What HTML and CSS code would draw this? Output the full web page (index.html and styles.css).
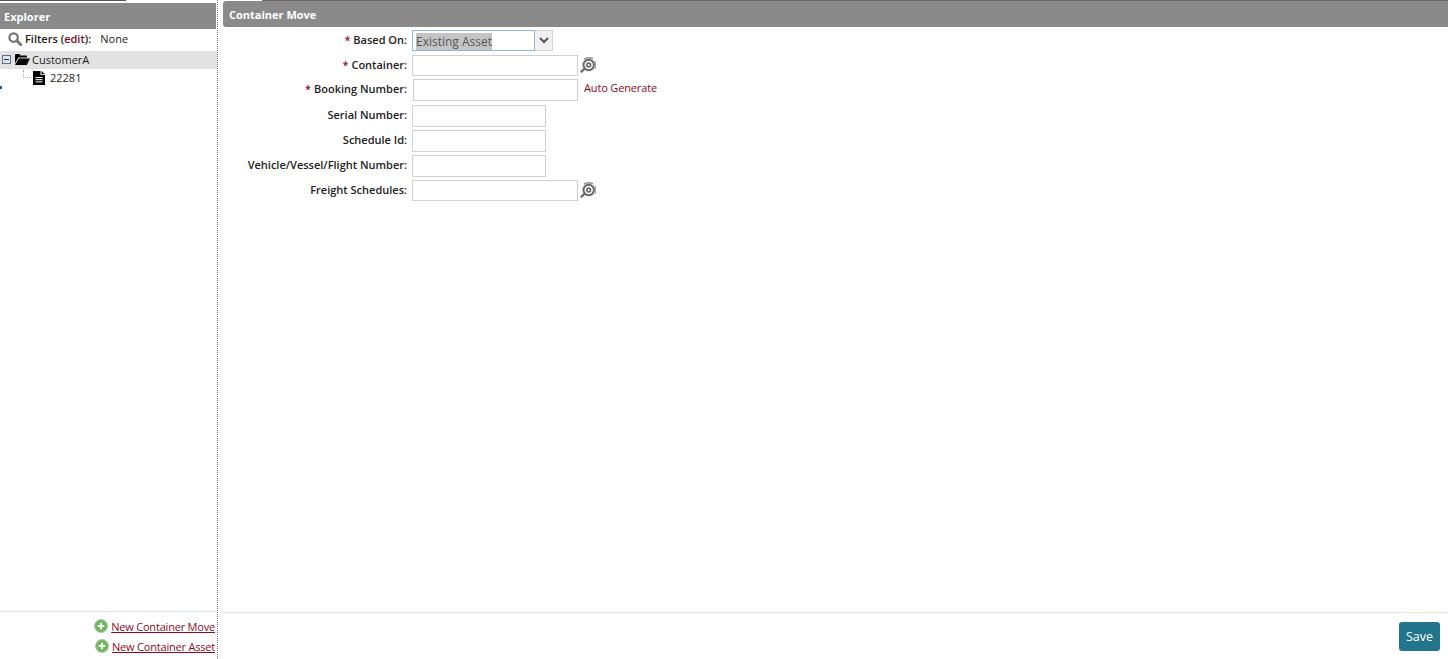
FILE: index.html
```html
<!DOCTYPE html>
<html lang="en">
<head>
<meta charset="utf-8">
<title>Container Move</title>
<link rel="stylesheet" href="styles.css">
</head>
<body>
<div class="app">
  <aside class="explorer">
    <div class="topline"></div>
    <h2 class="panel-title explorer-title">Explorer</h2>
    <div class="filters">
      <svg class="mag" width="14" height="14" viewBox="0 0 14 14"><circle cx="5.6" cy="5.6" r="4.2" fill="none" stroke="#757575" stroke-width="2.2"/><path d="M8.8 8.8l4 4" stroke="#757575" stroke-width="2.8" stroke-linecap="round"/></svg>
      <b class="filter-label">Filters (<span class="edit">edit</span>):</b>
      <span class="filter-value">None</span>
    </div>
    <div class="tree-row selected">
      <svg class="toggle" width="9" height="9" viewBox="0 0 9 9"><rect x=".5" y=".5" width="8" height="8" fill="#dfe6ee" stroke="#5b7187"/><path d="M2 4.5h5" stroke="#22344a"/></svg>
      <svg class="folder" width="15" height="11" viewBox="0 0 15 11"><path d="M0 1.2Q0 0 1 0h3.5l1 1.5H11q1 0 1 1V3.5H3.2L0 9.5z" fill="#000"/><path d="M3.8 4.5H15L11.8 11H0z" fill="#000"/></svg>
      <span>CustomerA</span>
    </div>
    <div class="tree-row child">
      <span class="connector"></span>
      <svg class="doc" width="12" height="14" viewBox="0 0 12 14"><path d="M0 0h7.5v4H12v10H0z" fill="#000"/><path d="M8.5 0L12 3.2H8.5z" fill="#000"/><path d="M2.5 6.5h7M2.5 8.7h7M2.5 10.9h7" stroke="#fff" stroke-width="1"/></svg>
      <span>22281</span>
    </div>
    <span class="marker"></span>
    <div class="spacer"></div>
    <div class="actions">
      <div class="action">
        <svg class="plus" width="14" height="14" viewBox="0 0 14 14"><circle cx="7" cy="7" r="6.5" fill="#74b565" stroke="#a9cfa0"/><path d="M7 3.8v6.4M3.8 7h6.4" stroke="#f4fbf2" stroke-width="2"/></svg>
        <a href="#">New Container Move</a>
      </div>
      <div class="action">
        <svg class="plus" width="14" height="14" viewBox="0 0 14 14"><circle cx="7" cy="7" r="6.5" fill="#74b565" stroke="#a9cfa0"/><path d="M7 3.8v6.4M3.8 7h6.4" stroke="#f4fbf2" stroke-width="2"/></svg>
        <a href="#">New Container Asset</a>
      </div>
    </div>
  </aside>
  <main class="content">
    <div class="content-topline"></div>
    <h2 class="panel-title content-title">Container Move</h2>
    <form class="form">
      <div class="row row-select">
        <label><span class="req">*</span> Based On:</label>
        <div class="select"><span class="select-text"><span class="highlight">Existing Asset</span></span><span class="select-btn"><svg width="10" height="7" viewBox="0 0 10 7"><path d="M1 1l4 4 4-4" fill="none" stroke="#555" stroke-width="2"/></svg></span></div>
      </div>
      <div class="row row-container">
        <label><span class="req">*</span> Container:</label>
        <input class="wide" type="text">
        <svg class="lookup" width="16" height="16" viewBox="0 0 16 16"><path d="M4 2.2Q8 -.4 13 1.6" fill="none" stroke="#8a8a8a" stroke-width="1.4"/><circle cx="8.7" cy="8" r="5.2" fill="none" stroke="#666" stroke-width="2"/><circle cx="8.7" cy="8" r="1.9" fill="none" stroke="#666" stroke-width="1.6"/><path d="M15.3 4v8" stroke="#999" stroke-width="1.2"/><path d="M4.8 11.5L.8 15.3" stroke="#666" stroke-width="2.2"/></svg>
      </div>
      <div class="row row-booking">
        <label><span class="req">*</span> Booking Number:</label>
        <input class="booking" type="text">
        <a class="auto" href="#">Auto Generate</a>
      </div>
      <div class="row row-short">
        <label>Serial Number:</label>
        <input class="short" type="text">
      </div>
      <div class="row row-short">
        <label>Schedule Id:</label>
        <input class="short" type="text">
      </div>
      <div class="row row-short">
        <label>Vehicle/Vessel/Flight Number:</label>
        <input class="short" type="text">
      </div>
      <div class="row row-freight">
        <label>Freight Schedules:</label>
        <input class="wide" type="text">
        <svg class="lookup" width="16" height="16" viewBox="0 0 16 16"><path d="M4 2.2Q8 -.4 13 1.6" fill="none" stroke="#8a8a8a" stroke-width="1.4"/><circle cx="8.7" cy="8" r="5.2" fill="none" stroke="#666" stroke-width="2"/><circle cx="8.7" cy="8" r="1.9" fill="none" stroke="#666" stroke-width="1.6"/><path d="M15.3 4v8" stroke="#999" stroke-width="1.2"/><path d="M4.8 11.5L.8 15.3" stroke="#666" stroke-width="2.2"/></svg>
      </div>
    </form>
    <div class="spacer"></div>
    <div class="footer"><button class="save" type="button">Save</button></div>
  </main>
</div>
</body>
</html>
```
FILE: styles.css
```css
* { box-sizing: border-box; }
html, body { margin: 0; height: 100%; overflow: hidden; background: #fff; }
body { font-family: "Open Sans", "Liberation Sans", sans-serif; font-size: 11px; color: #1c1c1c; }
.app { display: flex; height: 659px; }
.explorer { position: relative; width: 218px; display: flex; flex-direction: column; border-right: 1px dotted #777; }
.topline { height: 1px; width: 126px; background: #555; margin-bottom: 2px; }
.marker { position: absolute; left: 0; top: 86px; width: 2px; height: 3px; background: #1d5f80; }
.panel-title { margin: 0; background: #8a8a8a; color: #fff; font-size: 11px; font-weight: 700; }
.explorer-title { height: 26px; line-height: 28px; padding-left: 4px; margin-right: 1px; }
.filters { height: 22px; display: flex; align-items: center; padding: 0 0 3px 8px; }
.mag { margin-right: 3px; }
.filter-label { color: #222; font-weight: 600; }
.edit { color: #7d0a22; }
.filter-value { margin-left: 9px; }
.tree-row { display: flex; align-items: center; height: 18px; padding-bottom: 1px; }
.selected { background: #e2e2e2; padding-left: 2px; }
.toggle { margin-right: 4px; }
.folder { margin-right: 2px; }
.child { padding-left: 23px; }
.connector { width: 9px; height: 8px; margin-right: 1px; border-left: 1px dotted #aaa; border-bottom: 1px dotted #aaa; margin-top: -8px; }
.doc { margin-right: 5px; }
.spacer { flex: 1; }
.actions { border-top: 1px solid #e4e4e4; height: 48px; padding-top: 4px; display: flex; flex-direction: column; align-items: flex-end; padding-right: 2px; }
.action { height: 20px; display: flex; align-items: center; }
.plus { margin-right: 3px; }
.action a { color: #8c0a24; text-decoration: underline; letter-spacing: -.2px; }
.content { flex: 1; display: flex; flex-direction: column; padding-left: 5px; min-width: 0; }
.content-topline { height: 1px; margin-left: 39px; background: #666; }
.content-title { height: 26px; line-height: 28px; padding-left: 6px; border-radius: 3px 0 0 3px; }
.form { padding-top: 3px; }
.row { display: flex; align-items: center; height: 25px; }
.row label { width: 184px; flex: none; text-align: right; font-weight: 600; color: #222; margin: 0 5px 2px 0; }
.req { color: #8c0a24; }
.row-select { height: 21px; margin-bottom: 2px; }
.row-booking { height: 24px; margin-bottom: 2px; }
.row-booking label { margin-bottom: 4px; }
.row-short { height: 24px; margin-bottom: 1px; }
.row-short label { margin-bottom: 4px; }
.row-freight { height: 23px; }
.select { display: flex; width: 141px; height: 21px; }
.select-text { width: 123px; padding-left: 3px; border: 1px solid #8fb8d8; font-size: 12px; line-height: 21px; color: #555; }
.highlight { background: #c4c4c4; }
.select-btn { flex: 1; background: #f0f0f0; border: 1px solid #d4d4d4; border-left: 0; display: flex; align-items: center; justify-content: center; }
input { display: block; height: 22px; border: 1px solid #cfcfcf; background: #fff; padding: 0; }
.wide { width: 166px; height: 21px; }
.booking { width: 165px; margin-left: 1px; }
.short { width: 134px; }
.lookup { margin: 0 0 1px 2px; }
.auto { margin-left: 6px; color: #8c0a24; text-decoration: none; letter-spacing: -.15px; margin-bottom: 5px; }
.footer { border-top: 1px solid #e4e4e4; height: 47px; display: flex; justify-content: flex-end; align-items: flex-start; padding: 9px 8px 0 0; }
.save { width: 41px; height: 29px; background: #22758c; color: #fff; border: 0; border-radius: 3px; font: 500 12.5px "Open Sans", "Liberation Sans", sans-serif; padding: 0; }
```
